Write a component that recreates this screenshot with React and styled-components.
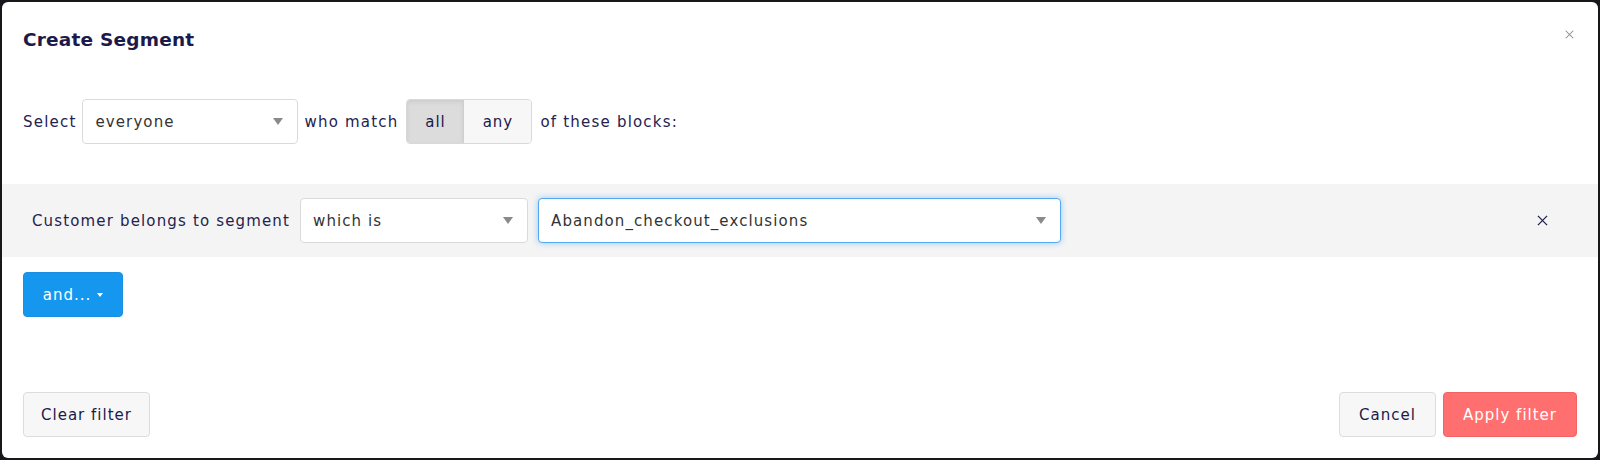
import React from 'react';
import styled, { createGlobalStyle, css } from 'styled-components';

const GlobalStyle = createGlobalStyle`
  html, body {
    margin: 0;
    padding: 0;
    background: #17171c;
  }
  body {
    font-family: "DejaVu Sans", Lato, sans-serif;
    color: #24224f;
  }
`;

const Modal = styled.div`
  box-sizing: border-box;
  margin: 2px;
  width: 1596px;
  height: 456px;
  background: #fff;
  border-radius: 6px;
  display: flex;
  flex-direction: column;
  overflow: hidden;
`;

const Header = styled.div`
  display: flex;
  align-items: center;
  justify-content: space-between;
  height: 24px;
  margin-top: 25px;
  padding: 0 22px 0 21px;
`;

const Title = styled.h2`
  margin: 0;
  font-size: 18.5px;
  font-weight: 700;
  letter-spacing: 0.2px;
  color: #1c1a4a;
`;

const CloseButton = styled.button`
  border: 0;
  background: none;
  padding: 0;
  width: 14px;
  height: 14px;
  display: flex;
  align-items: center;
  justify-content: center;
  color: ${p => p.$dark ? '#24224f' : '#8a8a8a'};
  margin-top: ${p => p.$dark ? '0' : '-10px'};
  cursor: pointer;
`;

const MatchRow = styled.div`
  display: flex;
  align-items: center;
  height: 45px;
  margin-top: 48px;
  padding-left: 21px;
  gap: 6px;
  font-size: 15px;
  letter-spacing: 1.2px;
`;

const Label = styled.span`
  white-space: nowrap;
`;

const SelectBox = styled.div`
  box-sizing: border-box;
  display: flex;
  align-items: center;
  justify-content: space-between;
  width: ${p => p.$width}px;
  height: 45px;
  padding: 0 14px 0 12px;
  background: #fff;
  border: 1px solid ${p => p.$focused ? '#55a7ef' : '#dadada'};
  border-radius: 4px;
  font-size: 15px;
  letter-spacing: 1.1px;
  color: #333;
  ${p => p.$focused && css`
    box-shadow: 0 0 6px rgba(40, 150, 240, 0.45);
  `}
`;

const Caret = styled.span`
  width: 0;
  height: 0;
  border-left: ${p => p.$small ? 3.5 : 5.5}px solid transparent;
  border-right: ${p => p.$small ? 3.5 : 5.5}px solid transparent;
  border-top: ${p => p.$small ? 4 : 7}px solid ${p => p.$small ? '#fff' : '#8a8a8a'};
`;

const Toggle = styled.div`
  display: flex;
  height: 45px;
  border: 1px solid #d9d9d9;
  border-radius: 4px;
  overflow: hidden;
  box-sizing: border-box;
  margin: 0 2px;
`;

const ToggleOption = styled.button`
  border: 0;
  width: ${p => p.$width}px;
  font-family: inherit;
  font-size: 15px;
  letter-spacing: 1px;
  color: #1c1a4a;
  background: ${p => p.$active ? '#dcdcdc' : '#f7f7f7'};
  box-shadow: ${p => p.$active ? 'inset 0 2px 4px rgba(0,0,0,0.08)' : 'none'};
  border-right: ${p => p.$active ? '1px solid #cfcfcf' : '0'};
  padding: 0;
`;

const Block = styled.div`
  display: flex;
  align-items: center;
  height: 73px;
  margin-top: 40px;
  background: #f4f4f4;
  padding: 0 49px 0 30px;
  gap: 10px;
  font-size: 15px;
  letter-spacing: 1.15px;
`;

const Spacer = styled.div`
  flex: 1;
`;

const Button = styled.button`
  box-sizing: border-box;
  height: 45px;
  width: ${p => p.$width}px;
  border-radius: 4px;
  font-family: inherit;
  font-size: 15px;
  letter-spacing: 1px;
  display: flex;
  align-items: center;
  justify-content: center;
  gap: 6px;
  padding: 0;
  cursor: pointer;
  ${p => p.$variant === 'primary' && css`
    background: #1597f0;
    border: 1px solid #1a8fe0;
    color: #fff;
  `}
  ${p => p.$variant === 'danger' && css`
    background: #ff6f6f;
    border: 1px solid #f26363;
    color: #fff;
  `}
  ${p => p.$variant === 'default' && css`
    background: #f7f7f7;
    border: 1px solid #dcdcdc;
    color: #1c1a4a;
  `}
`;

const AddRow = styled.div`
  display: flex;
  padding-left: 21px;
  margin-top: 15px;
`;

const Footer = styled.div`
  display: flex;
  align-items: center;
  margin-top: auto;
  padding: 0 21px 21px 21px;
  gap: 7px;
`;

function Cross({ size }) {
  return (
    <svg width={size} height={size} viewBox="0 0 12 12">
      <path d="M1 1 L11 11 M11 1 L1 11" stroke="currentColor" strokeWidth="1.4" fill="none" />
    </svg>
  );
}

export default function App() {
  return (
    <>
      <GlobalStyle />
      <Modal>
        <Header>
          <Title>Create Segment</Title>
          <CloseButton aria-label="Close"><Cross size={9} /></CloseButton>
        </Header>

        <MatchRow>
          <Label>Select</Label>
          <SelectBox $width={216}>
            <span>everyone</span>
            <Caret />
          </SelectBox>
          <Label>who match</Label>
          <Toggle>
            <ToggleOption $active $width={57}>all</ToggleOption>
            <ToggleOption $width={67}>any</ToggleOption>
          </Toggle>
          <Label>of these blocks:</Label>
        </MatchRow>

        <Block>
          <Label>Customer belongs to segment</Label>
          <SelectBox $width={228}>
            <span>which is</span>
            <Caret />
          </SelectBox>
          <SelectBox $width={523} $focused>
            <span>Abandon_checkout_exclusions</span>
            <Caret />
          </SelectBox>
          <Spacer />
          <CloseButton $dark aria-label="Remove"><Cross size={11} /></CloseButton>
        </Block>

        <AddRow>
          <Button $variant="primary" $width={100}>
            and...
            <Caret $small />
          </Button>
        </AddRow>

        <Footer>
          <Button $variant="default" $width={127}>Clear filter</Button>
          <Spacer />
          <Button $variant="default" $width={97}>Cancel</Button>
          <Button $variant="danger" $width={134}>Apply filter</Button>
        </Footer>
      </Modal>
    </>
  );
}
